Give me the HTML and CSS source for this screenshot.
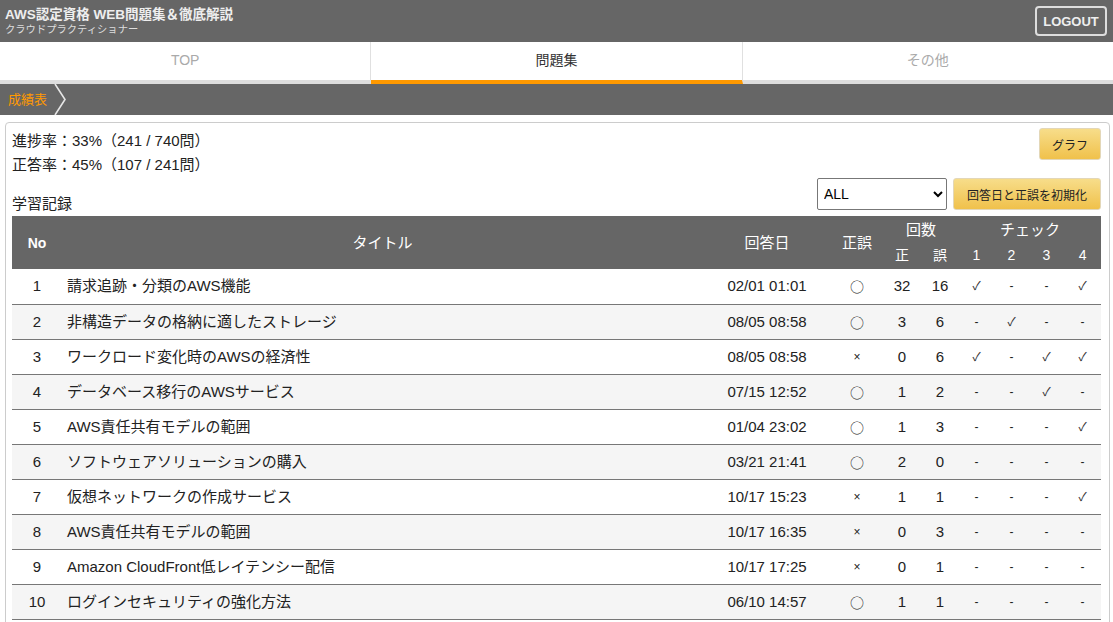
FILE: index.html
```html
<!DOCTYPE html>
<html lang="ja">
<head>
<meta charset="utf-8">
<title>成績表</title>
<link rel="stylesheet" href="styles.css">
</head>
<body>
<header class="topbar">
  <div class="brand">
    <div class="brand-title">AWS認定資格 WEB問題集＆徹底解説</div>
    <div class="brand-sub">クラウドプラクティショナー</div>
  </div>
  <button class="logout">LOGOUT</button>
</header>
<nav class="tabs">
  <div class="tab">TOP</div>
  <div class="tab active">問題集</div>
  <div class="tab last">その他</div>
</nav>
<div class="crumbs">
  <span class="crumb">成績表</span>
  <svg class="chev" width="14" height="31" viewBox="0 0 14 31"><polyline points="1,0 11,15.5 1,31" fill="none" stroke="#e6e6e6" stroke-width="1.6"/></svg>
</div>
<main class="card">
  <div class="top">
    <div class="stats">
      <div>進捗率：33%（241 / 740問）</div>
      <div>正答率：45%（107 / 241問）</div>
    </div>
    <button class="btn graph">グラフ</button>
  </div>
  <div class="toolbar">
    <div class="label">学習記録</div>
    <div class="controls">
      <select class="sel"><option>ALL</option></select>
      <button class="btn reset">回答日と正誤を初期化</button>
    </div>
  </div>
  <table class="rec">
    <colgroup>
      <col class="c-no"><col class="c-title"><col class="c-date"><col class="c-ok"><col class="c-n"><col class="c-n"><col class="c-ck"><col class="c-ck"><col class="c-ck"><col class="c-ck4">
    </colgroup>
    <thead>
      <tr class="h1">
        <th rowspan="2" class="no-h">No</th>
        <th rowspan="2">タイトル</th>
        <th rowspan="2">回答日</th>
        <th rowspan="2">正誤</th>
        <th colspan="2" class="r1">回数</th>
        <th colspan="4" class="r1">チェック</th>
      </tr>
      <tr class="h2">
        <th class="r2">正</th><th class="r2">誤</th>
        <th class="r2">1</th><th class="r2">2</th><th class="r2">3</th><th class="r2">4</th>
      </tr>
    </thead>
    <tbody>
      <tr><td>1</td><td class="t">請求追跡・分類のAWS機能</td><td>02/01 01:01</td><td class="mk">○</td><td>32</td><td>16</td><td class="ck">✓</td><td class="ds">-</td><td class="ds">-</td><td class="ck">✓</td></tr>
      <tr><td>2</td><td class="t">非構造データの格納に適したストレージ</td><td>08/05 08:58</td><td class="mk">○</td><td>3</td><td>6</td><td class="ds">-</td><td class="ck">✓</td><td class="ds">-</td><td class="ds">-</td></tr>
      <tr><td>3</td><td class="t">ワークロード変化時のAWSの経済性</td><td>08/05 08:58</td><td class="x">×</td><td>0</td><td>6</td><td class="ck">✓</td><td class="ds">-</td><td class="ck">✓</td><td class="ck">✓</td></tr>
      <tr><td>4</td><td class="t">データベース移行のAWSサービス</td><td>07/15 12:52</td><td class="mk">○</td><td>1</td><td>2</td><td class="ds">-</td><td class="ds">-</td><td class="ck">✓</td><td class="ds">-</td></tr>
      <tr><td>5</td><td class="t">AWS責任共有モデルの範囲</td><td>01/04 23:02</td><td class="mk">○</td><td>1</td><td>3</td><td class="ds">-</td><td class="ds">-</td><td class="ds">-</td><td class="ck">✓</td></tr>
      <tr><td>6</td><td class="t">ソフトウェアソリューションの購入</td><td>03/21 21:41</td><td class="mk">○</td><td>2</td><td>0</td><td class="ds">-</td><td class="ds">-</td><td class="ds">-</td><td class="ds">-</td></tr>
      <tr><td>7</td><td class="t">仮想ネットワークの作成サービス</td><td>10/17 15:23</td><td class="x">×</td><td>1</td><td>1</td><td class="ds">-</td><td class="ds">-</td><td class="ds">-</td><td class="ck">✓</td></tr>
      <tr><td>8</td><td class="t">AWS責任共有モデルの範囲</td><td>10/17 16:35</td><td class="x">×</td><td>0</td><td>3</td><td class="ds">-</td><td class="ds">-</td><td class="ds">-</td><td class="ds">-</td></tr>
      <tr><td>9</td><td class="t">Amazon CloudFront低レイテンシー配信</td><td>10/17 17:25</td><td class="x">×</td><td>0</td><td>1</td><td class="ds">-</td><td class="ds">-</td><td class="ds">-</td><td class="ds">-</td></tr>
      <tr><td>10</td><td class="t">ログインセキュリティの強化方法</td><td>06/10 14:57</td><td class="mk">○</td><td>1</td><td>1</td><td class="ds">-</td><td class="ds">-</td><td class="ds">-</td><td class="ds">-</td></tr>
    </tbody>
  </table>
</main>
</body>
</html>
```

FILE: styles.css
```css
* { box-sizing: border-box; }
html, body { margin: 0; padding: 0; }
body {
  font-family: "Liberation Sans", "Noto Sans CJK JP", sans-serif;
  color: #222;
  background: #fff;
  overflow: hidden;
}
.topbar {
  height: 42px;
  background: #666;
  display: flex;
  justify-content: space-between;
  align-items: flex-start;
  padding: 0 6px 0 5px;
}
.brand { padding-top: 7px; color: #eee; }
.brand-title { font-size: 13.5px; font-weight: bold; line-height: 16px; }
.brand-sub { font-size: 10.3px; line-height: 14px; color: #ddd; }
.logout {
  margin-top: 6px;
  width: 72px;
  height: 30px;
  background: transparent;
  border: 2px solid #ddd;
  border-radius: 4px;
  color: #eee;
  font-family: "Liberation Sans", sans-serif;
  font-weight: bold;
  font-size: 13px;
  padding: 0;
}
.tabs {
  display: flex;
  height: 42px;
  background: #fff;
}
.tab {
  flex: 1;
  text-align: center;
  font-size: 14px;
  line-height: 36px;
  color: #aaa;
  border-right: 1px solid #e0e0e0;
  border-bottom: 4px solid #ddd;
}
.tab.last { border-right: none; }
.tab.active { color: #333; border-bottom-color: #f90; }
.crumbs {
  height: 31px;
  background: #666;
  display: flex;
  align-items: center;
  padding-left: 8px;
}
.crumb { color: #f90; font-size: 13px; line-height: 31px; }
.chev { margin-left: 7px; display: block; }
.card {
  margin: 7px 3px 0 5px;
  border: 1px solid #ccc;
  border-radius: 4px;
  padding: 6px 8px 0 6px;
  height: 520px;
}
.top { display: flex; justify-content: space-between; align-items: flex-start; }
.stats { font-size: 15px; line-height: 24px; }
.btn {
  font-family: "Liberation Sans", "Noto Sans CJK JP", sans-serif;
  font-size: 12px;
  color: #222;
  background: linear-gradient(#f7dd8a, #f0c14b);
  border: 1px solid #e3d7b8;
  border-radius: 3px;
  height: 32px;
  padding: 0;
}
.graph { width: 62px; margin-top: -1px; }
.toolbar {
  display: flex;
  justify-content: space-between;
  align-items: flex-end;
  margin-top: 1px;
}
.label { font-size: 15px; line-height: 20px; margin-bottom: -4px; }
.controls { display: flex; gap: 6px; }
.sel {
  width: 130px;
  height: 32px;
  border: 1px solid #777;
  border-radius: 2px;
  background: #fff;
  font-family: "Liberation Sans", sans-serif;
  font-size: 14px;
  padding-left: 2px;
  color: #000;
}
.reset { width: 148px; }
.rec {
  margin-top: 6px;
  width: 1089px;
  border-collapse: collapse;
  table-layout: fixed;
  font-size: 15px;
}
.c-no { width: 50px; }
.c-title { width: 641px; }
.c-date { width: 128px; }
.c-ok { width: 52px; }
.c-n { width: 38px; }
.c-ck { width: 35px; }
.c-ck4 { width: 37px; }
.rec thead tr.h1 { height: 27px; }
.rec thead tr.h2 { height: 26px; }
.rec thead th {
  background: #666;
  color: #fff;
  font-weight: normal;
  font-size: 15px;
  line-height: 18px;
  padding: 0;
  text-align: center;
}
.rec thead th.no-h { font-weight: bold; font-size: 14px; }
.rec thead th.r1 { vertical-align: middle; }
.rec thead th.r2 { vertical-align: top; line-height: 24px; font-size: 14px; }
.rec tbody tr { height: 35px; }
.rec tbody td {
  padding: 0;
  text-align: center;
  border-bottom: 1px solid #777;
  white-space: nowrap;
  line-height: 18px;
}
.rec tbody tr:nth-child(even) td { background: #f5f5f5; }
.rec tbody td.t { text-align: left; padding-left: 5px; }
.rec tbody td.mk { font-family: "Noto Sans CJK JP", sans-serif; font-size: 14px; }
.rec tbody td.x { font-size: 12px; }
.rec tbody td.ck { font-size: 12px; color: #333; }
.rec tbody td.ds { font-size: 12px; }
```
